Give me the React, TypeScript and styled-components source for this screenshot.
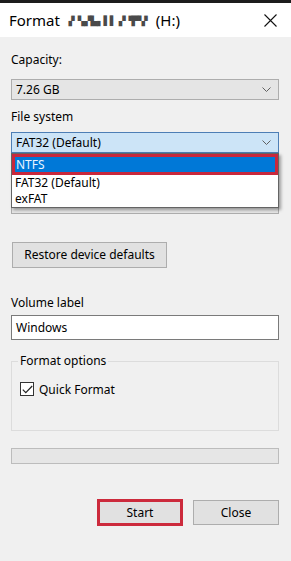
import React from "react";
import styled, { createGlobalStyle } from "styled-components";

const Global = createGlobalStyle`
  html, body { margin: 0; padding: 0; background: #f0f0f0; }
  body {
    font-family: "Noto Sans", "Segoe UI", sans-serif;
    font-size: 12px;
    color: #000;
  }
  * { box-sizing: border-box; }
`;

const Window = styled.div`
  width: 291px;
  height: 561px;
  border-top: 3px solid #1c1c1c;
  background: #f0f0f0;
  display: flex;
  flex-direction: column;
  overflow: hidden;
`;

const TitleBar = styled.div`
  height: 34px;
  flex: none;
  background: #fff;
  display: flex;
  align-items: center;
  padding: 0 14px 0 9px;
  font-size: 15px;
  color: #000;
`;

const Title = styled.div`
  flex: 1;
  display: flex;
  align-items: center;
  white-space: nowrap;
  gap: 5px;
`;

const Mosaic = styled.span`
  font-family: "DejaVu Sans", sans-serif;
  font-size: 9px;
  letter-spacing: -0.5px;
  color: #4a4a4a;
  margin-top: 2px;
`;

const CloseIcon = styled.svg`
  width: 13px;
  height: 13px;
  display: block;
`;

const Body = styled.div`
  position: relative;
  display: flex;
  flex-direction: column;
  align-items: stretch;
  padding: 15px 12px 0 11px;
`;

const Label = styled.div<{ $mb: number; $mt?: number }>`
  height: 16px;
  line-height: 16px;
  margin-top: ${(p) => p.$mt ?? 0}px;
  margin-bottom: ${(p) => p.$mb}px;
  white-space: nowrap;
`;

const ComboWrap = styled.div<{ $mb?: number }>`
  position: relative;
  margin-bottom: ${(p) => p.$mb ?? 0}px;
`;

const Combo = styled.div<{ $active?: boolean }>`
  height: 21px;
  display: flex;
  align-items: center;
  padding: 0 7px 0 4px;
  border: 1px solid ${(p) => (p.$active ? "#4d7eb5" : "#adadad")};
  background: ${(p) => (p.$active ? "#cce4f7" : "#e5e5e5")};
  line-height: 16px;
`;

const ComboText = styled.span`
  flex: 1;
  white-space: nowrap;
`;

const Chevron = styled.svg`
  width: 9px;
  height: 5px;
  display: block;
`;

const List = styled.div`
  position: absolute;
  top: 100%;
  left: 0;
  right: 0;
  background: #fff;
  border: 1px solid #646464;
  box-shadow: 2px 2px 3px rgba(0, 0, 0, 0.35);
  display: flex;
  flex-direction: column;
  z-index: 2;
`;

const Item = styled.div<{ $selected?: boolean }>`
  height: ${(p) => (p.$selected ? 21 : 16)}px;
  line-height: ${(p) => (p.$selected ? 15 : 16)}px;
  padding-left: ${(p) => (p.$selected ? 1 : 3)}px;
  background: ${(p) => (p.$selected ? "#0078d7" : "#fff")};
  color: ${(p) => (p.$selected ? "#eaf4ff" : "#000")};
  border: ${(p) => (p.$selected ? "3px solid #c8283c" : "none")};
  white-space: nowrap;
`;

const Button = styled.button<{ $w: number; $marked?: boolean }>`
  width: ${(p) => p.$w}px;
  height: ${(p) => (p.$marked ? 27 : 25)}px;
  font-family: inherit;
  font-size: 12px;
  color: #000;
  background: #e1e1e1;
  border: ${(p) => (p.$marked ? "3px solid #cc2a3c" : "1px solid #adadad")};
  padding: 0;
  line-height: 16px;
`;

const RestoreButton = styled(Button)`
  height: 26px;
  margin: 28px 0 0 1px;
  align-self: flex-start;
`;

const TextInput = styled.div`
  height: 25px;
  display: flex;
  align-items: center;
  padding-left: 4px;
  background: #fff;
  border: 1px solid #7a7a7a;
`;

const Group = styled.fieldset`
  margin: 13px 0 0 0;
  padding: 11px 0 32px 8px;
  border: 1px solid #dcdcdc;
  min-width: 0;
`;

const Legend = styled.legend`
  padding: 0 2px;
  margin-left: -2px;
  line-height: 16px;
`;

const CheckRow = styled.label`
  display: flex;
  align-items: center;
  gap: 5px;
  height: 18px;
`;

const CheckBox = styled.span`
  width: 14px;
  height: 14px;
  border: 1px solid #333;
  background: #fff;
  display: flex;
  align-items: center;
  justify-content: center;
`;

const Progress = styled.div`
  margin-top: 17px;
  height: 16px;
  border: 1px solid #bcbcbc;
  background: #e6e6e6;
`;

const ButtonRow = styled.div`
  margin-top: 35px;
  display: flex;
  justify-content: flex-end;
  align-items: center;
  gap: 10px;
`;

const ChevronDown = () => (
  <Chevron viewBox="0 0 9 5">
    <path d="M0.5 0.5 L4.5 4.5 L8.5 0.5" fill="none" stroke="#606060" strokeWidth="1" />
  </Chevron>
);

export default function App() {
  return (
    <>
      <Global />
      <Window>
        <TitleBar>
          <Title>
            <span>Format</span>
            <Mosaic>▗▘▚▞▙▖▌▌ ▞▝▛▚▘</Mosaic>
            <span>(H:)</span>
          </Title>
          <CloseIcon viewBox="0 0 13 13">
            <path d="M0.5 0.5 L12.5 12.5 M12.5 0.5 L0.5 12.5" stroke="#111" strokeWidth="1.1" />
          </CloseIcon>
        </TitleBar>
        <Body>
          <Label $mb={11}>Capacity:</Label>
          <ComboWrap $mb={9}>
            <Combo>
              <ComboText>7.26 GB</ComboText>
              <ChevronDown />
            </Combo>
          </ComboWrap>
          <Label $mb={7}>File system</Label>
          <ComboWrap>
            <Combo $active>
              <ComboText>FAT32 (Default)</ComboText>
              <ChevronDown />
            </Combo>
            <List>
              <Item $selected>NTFS</Item>
              <Item>FAT32 (Default)</Item>
              <Item>exFAT</Item>
            </List>
          </ComboWrap>
          <Label $mt={16} $mb={8} aria-hidden />
          <ComboWrap>
            <Combo>
              <ComboText />
              <ChevronDown />
            </Combo>
          </ComboWrap>
          <RestoreButton $w={155}>Restore device defaults</RestoreButton>
          <Label $mt={27} $mb={4}>Volume label</Label>
          <TextInput>Windows</TextInput>
          <Group>
            <Legend>Format options</Legend>
            <CheckRow>
              <CheckBox>
                <svg width="11" height="9" viewBox="0 0 11 9">
                  <path d="M0.8 4.6 L3.8 7.6 L10.2 1" fill="none" stroke="#222" strokeWidth="1.2" />
                </svg>
              </CheckBox>
              Quick Format
            </CheckRow>
          </Group>
          <Progress />
          <ButtonRow>
            <Button $w={86} $marked>Start</Button>
            <Button $w={86}>Close</Button>
          </ButtonRow>
        </Body>
      </Window>
    </>
  );
}
